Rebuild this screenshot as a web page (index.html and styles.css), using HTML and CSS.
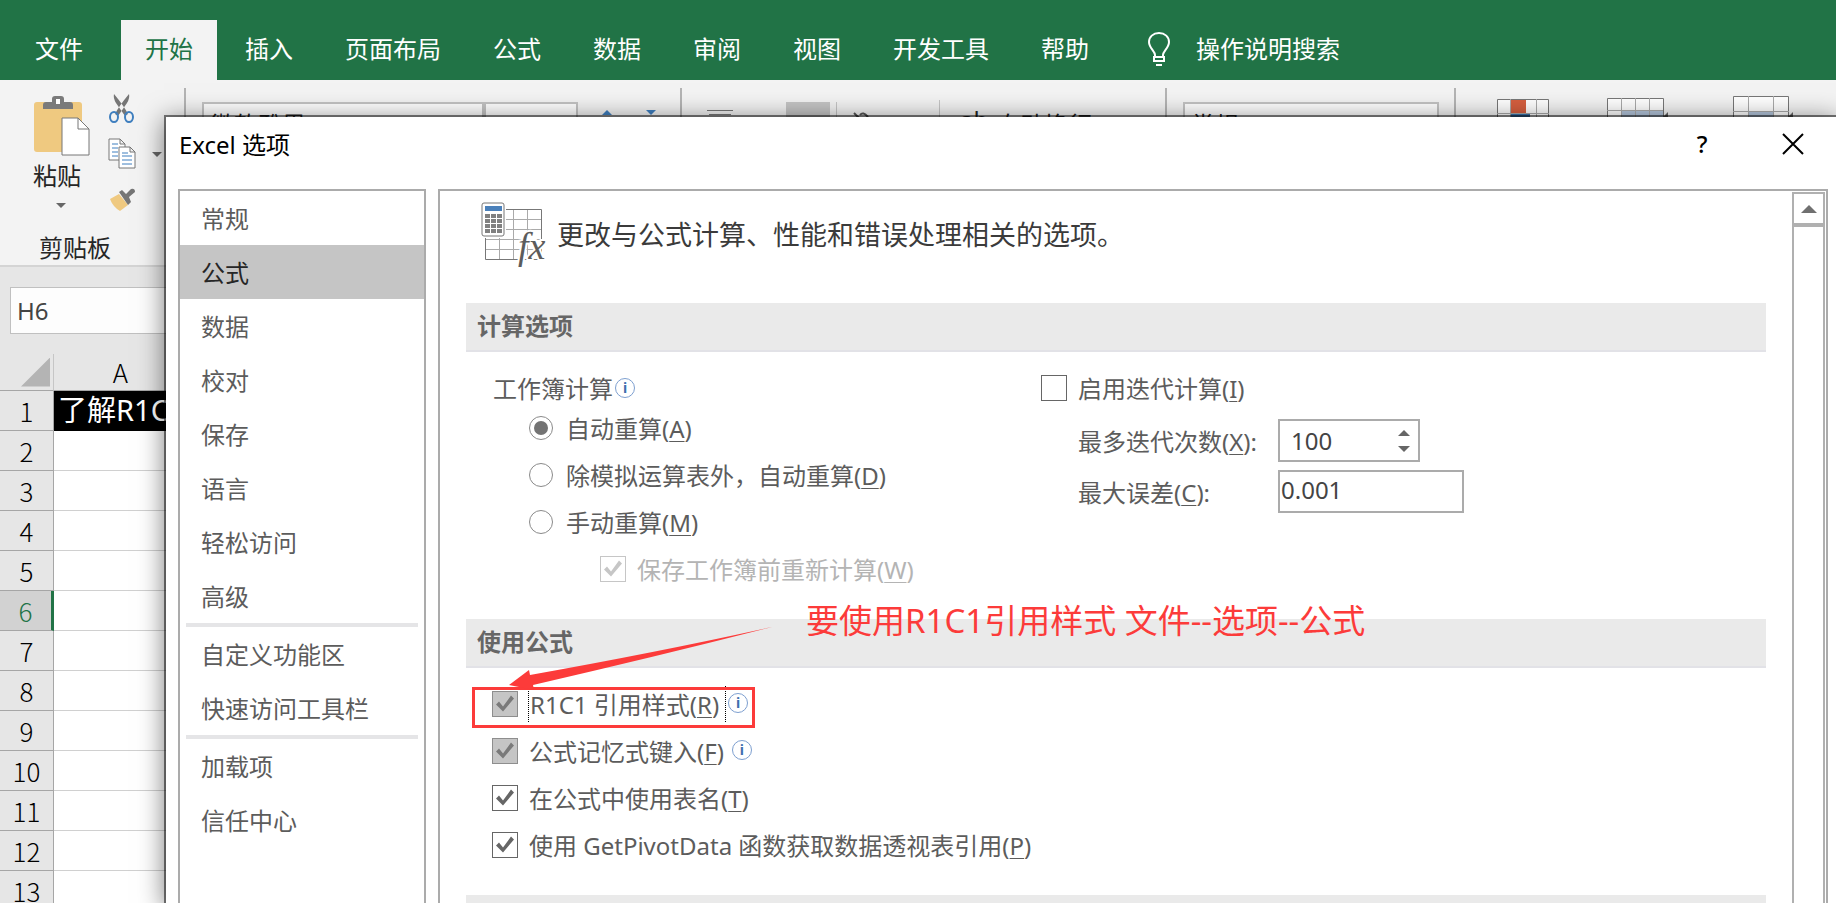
FILE: index.html
```html
<!DOCTYPE html>
<html lang="zh-CN">

<head>
    <meta charset="UTF-8">
    <meta name="viewport" content="width=device-width, initial-scale=1.0">
    <title>Excel 选项</title>
    <link rel="stylesheet" href="styles.css">
</head>

<body>

    <div class="tabs">
        <button class="tab file-tab">文件</button>
        <button class="tab active">开始</button>
        <button class="tab">插入</button>
        <button class="tab">页面布局</button>
        <button class="tab">公式</button>
        <button class="tab">数据</button>
        <button class="tab">审阅</button>
        <button class="tab">视图</button>
        <button class="tab">开发工具</button>
        <button class="tab">帮助</button>
        <button class="tell-me">
            <svg width="24" height="36" viewBox="0 0 24 36" fill="none" stroke="#fff" stroke-width="2">
                <path d="M8 26V23C8 19 2 16 2 10C2 5 6 1 12 1S22 5 22 10C22 16 16 19 16 23V26" />
                <path d="M7 25H17M7 29H17M7 24V30M17 24V30M9 33H15" />
            </svg>
            <span>操作说明搜索</span>
        </button>
    </div>

    <div class="ribbon">
        <div class="group clipboard">
            <div class="clipboard-tools">
                <button class="paste">
                    <svg width="58" height="62" viewBox="0 0 58 62">
                        <rect x="1" y="7" width="48" height="50" rx="3" fill="#efc980" />
                        <path d="M10 14V10Q10 7 13 7H19V4Q19 1 22 1H28Q31 1 31 4V7H37Q40 7 40 10V14Z" fill="#7a7a7a" />
                        <rect x="23" y="4" width="4" height="5" fill="#fff" />
                        <path d="M29 23H45L56 34V60H29Z" fill="#fff" stroke="#777" />
                        <path d="M45 23V34H56" fill="none" stroke="#777" />
                    </svg>
                    <span>粘贴</span>
                    <i class="caret"></i>
                </button>
                <div class="small-tools">
                    <button>
                        <svg width="28" height="30" viewBox="0 0 28 30">
                            <path d="M6 0Q5 4 8 9L17 22L20 20Q16 12 6 0Z M21 0Q22 4 19 9L10 22L7 20Q11 12 21 0Z" fill="#767676" />
                            <ellipse cx="6" cy="23" rx="4" ry="5" fill="none" stroke="#3f7fbf" stroke-width="2" />
                            <ellipse cx="21" cy="23" rx="4" ry="5" fill="none" stroke="#3f7fbf" stroke-width="2" />
                        </svg>
                    </button>
                    <button class="copy">
                        <svg width="28" height="32" viewBox="0 0 28 32" fill="#fff" stroke="#777">
                            <path d="M1 1H12L17 6V22H1Z M12 1V6H17" />
                            <path d="M4 6H10M4 10H10M4 14H10M4 18H10" stroke="#3f7fbf" />
                            <path d="M11 9H22L27 14V30H11Z M22 9V14H27" />
                            <path d="M14 15H20M14 18H24M14 22H24M14 26H24" stroke="#3f7fbf" />
                        </svg>
                        <i class="caret"></i>
                    </button>
                    <button>
                        <svg width="28" height="24" viewBox="0 0 28 24">
                            <path d="M2 11L11 6L20 17L12 23Q5 19 2 11Z" fill="#efc980" />
                            <path d="M11 4L14 2L18 6L23 1Q27 0 27 4L21 9L23 14L20 17Z" fill="#767676" />
                        </svg>
                    </button>
                </div>
            </div>
            <div class="group-name">剪贴板</div>
        </div>
        <div class="group font-group">
            <div class="combo font-name">微软雅黑</div>
            <div class="combo font-size">11</div>
            <i class="tri up"></i>
            <i class="tri down"></i>
        </div>
        <div class="group align-group">
            <svg width="26" height="16" viewBox="0 0 26 16" stroke="#777" stroke-width="1">
                <path d="M0 8.500H26M2 12.500H24" />
            </svg>
            <i class="pressed"></i>
            <i class="thin-line"></i>
            <svg class="rotate" width="18" height="16" viewBox="0 0 18 16" fill="none" stroke="#555" stroke-width="2">
                <path d="M1 11L6 16M7 13Q10 9 15 15" />
            </svg>
            <i class="thin-line second"></i>
            <span class="wrap-ab">ab</span>
            <span class="wrap">自动换行</span>
        </div>
        <div class="group number-group">
            <div class="combo number-format">常规</div>
        </div>
        <div class="group style-group">
            <svg width="52" height="20" viewBox="0 0 52 20">
                <path d="M.5 1.500H51.500V20H.5Z" fill="#fff" stroke="#777" />
                <path d="M13.500 1V20M39.500 1V20M0 15.500H52" stroke="#aaa" />
                <rect x="14" y="2" width="15" height="13" fill="#d65f3f" />
                <rect x="14" y="16" width="19" height="4" fill="#3a75b0" />
            </svg>
            <svg width="62" height="20" viewBox="0 0 62 20">
                <path d="M.5 .5H56.500V20H.5Z" fill="#fff" stroke="#777" />
                <rect x="15" y="13" width="41" height="7" fill="#b4c6dc" />
                <path d="M14.500 0V20M28.500 0V20M42.500 0V20M0 12.500H56" stroke="#aaa" />
                <path d="M55 20L61 14V20Z" fill="#666" />
            </svg>
            <svg width="62" height="22" viewBox="0 0 62 22">
                <path d="M.5 .5H55.500V22H.5Z" fill="#fff" stroke="#777" />
                <rect x="16" y="16" width="24" height="6" fill="#b4c6dc" />
                <path d="M15.500 0V22M40.500 0V22M0 15.500H56" stroke="#aaa" />
                <path d="M54 22L60 16V22Z" fill="#666" />
            </svg>
        </div>
    </div>

    <div class="formula-bar">
        <input class="name-box" type="text" value="H6" aria-label="名称框">
    </div>

    <table class="sheet">
        <thead>
            <tr><th class="corner"><i></i></th><th class="col">A</th><th></th></tr>
        </thead>
        <tbody>
            <tr><th>1</th><td class="filled">了解R1C1</td><td></td></tr>
            <tr><th>2</th><td></td><td></td></tr>
            <tr><th>3</th><td></td><td></td></tr>
            <tr><th>4</th><td></td><td></td></tr>
            <tr><th>5</th><td></td><td></td></tr>
            <tr class="current"><th>6</th><td></td><td></td></tr>
            <tr><th>7</th><td></td><td></td></tr>
            <tr><th>8</th><td></td><td></td></tr>
            <tr><th>9</th><td></td><td></td></tr>
            <tr><th>10</th><td></td><td></td></tr>
            <tr><th>11</th><td></td><td></td></tr>
            <tr><th>12</th><td></td><td></td></tr>
            <tr><th>13</th><td></td><td></td></tr>
        </tbody>
    </table>

    <div class="dialog">
        <div class="title-bar">
            <span class="title">Excel 选项</span>
            <button class="help">?</button>
            <button class="close" aria-label="关闭">
                <svg width="22" height="22" viewBox="0 0 22 22" stroke="#000" stroke-width="2">
                    <path d="M1 1L21 21M21 1L1 21" />
                </svg>
            </button>
        </div>

        <div class="dialog-body">
            <div class="categories">
                <button>常规</button>
                <button class="selected">公式</button>
                <button>数据</button>
                <button>校对</button>
                <button>保存</button>
                <button>语言</button>
                <button>轻松访问</button>
                <button>高级</button>
                <hr>
                <button>自定义功能区</button>
                <button>快速访问工具栏</button>
                <hr>
                <button>加载项</button>
                <button>信任中心</button>
            </div>

            <div class="panel">
                <div class="options">
                    <div class="intro">
                        <svg width="66" height="66" viewBox="0 0 66 66">
                            <path d="M4.500 7.500H60.500V57.500H4.500Z" fill="#fff" stroke="#777" />
                            <path d="M18.500 8V57M32.500 8V57M46.500 8V57M5 17.500H60M5 27.500H60M5 37.500H60M5 47.500H60" stroke="#aaa" />
                            <rect x="0" y="0" width="25" height="36" fill="#fff" />
                            <rect x="1" y="1" width="22" height="33" rx="2" fill="#fff" stroke="#777" />
                            <rect x="4" y="4" width="17" height="5" fill="#4a80ba" />
                            <path d="M4 14H21M4 19H21M4 24H21M4 29H21" stroke="#808080" stroke-width="4" stroke-dasharray="5 1" />
                            <text x="37" y="57" class="fx-text fx-halo">fx</text>
                            <text x="37" y="57" class="fx-text">fx</text>
                        </svg>
                        <span>更改与公式计算、性能和错误处理相关的选项。</span>
                    </div>

                    <h2>计算选项</h2>
                    <div class="section calc">
                        <div class="calc-mode">
                            <div class="row-title">工作簿计算<i class="info">i</i></div>
                            <label class="row radio-row"><input type="radio" name="calc" checked><span>自动重算(<u>A</u>)</span></label>
                            <label class="row radio-row"><input type="radio" name="calc"><span>除模拟运算表外，自动重算(<u>D</u>)</span></label>
                            <label class="row radio-row"><input type="radio" name="calc"><span>手动重算(<u>M</u>)</span></label>
                            <label class="row sub-row"><input type="checkbox" checked disabled><span>保存工作簿前重新计算(<u>W</u>)</span></label>
                        </div>
                        <div class="iteration">
                            <label class="row-title check-title"><input type="checkbox"><span>启用迭代计算(<u>I</u>)</span></label>
                            <div class="field">
                                <label for="max-iter">最多迭代次数(<u>X</u>):</label>
                                <div class="spinner">
                                    <input type="text" id="max-iter" value="100">
                                    <div class="spin-buttons">
                                        <button class="tri up" aria-label="增加"></button>
                                        <button class="tri down" aria-label="减少"></button>
                                    </div>
                                </div>
                            </div>
                            <div class="field">
                                <label for="max-change">最大误差(<u>C</u>):</label>
                                <input type="text" id="max-change" class="text-box" value="0.001">
                            </div>
                        </div>
                    </div>

                    <h2>使用公式</h2>
                    <div class="section formulas">
                        <div class="row">
                            <label class="focused"><input type="checkbox" class="gray" checked><span>R1C1 引用样式(<u>R</u>)</span></label><i class="info">i</i>
                            <div class="mark-box"></div>
                            <svg class="mark-arrow" width="264" height="64" viewBox="0 0 264 64">
                                <path d="M0 58L20 43L21 48Q150 25 263 0Q150 29 24 58L25 63Z" fill="#fc3b3a" />
                            </svg>
                            <div class="mark-text">要使用R1C1引用样式 文件--选项--公式</div>
                        </div>
                        <div class="row">
                            <label><input type="checkbox" class="gray" checked><span>公式记忆式键入(<u>F</u>)</span></label><i class="info">i</i>
                        </div>
                        <div class="row">
                            <label><input type="checkbox" checked><span>在公式中使用表名(<u>T</u>)</span></label>
                        </div>
                        <div class="row">
                            <label><input type="checkbox" checked><span>使用 GetPivotData 函数获取数据透视表引用(<u>P</u>)</span></label>
                        </div>
                    </div>

                    <h2></h2>
                </div>

                <div class="scrollbar">
                    <button aria-label="向上滚动"><i class="tri up"></i></button>
                    <div class="thumb"></div>
                </div>
            </div>
        </div>
    </div>

</body>

</html>
```

FILE: styles.css
```css
* {
    box-sizing: border-box;
}

body {
    margin: 0;
    height: 100vh;
    overflow: hidden;
    position: relative;
    background-color: #e6e6e6;
    font-family: "Noto Sans", "Noto Sans CJK SC", sans-serif;
    font-size: 24px;
    color: #5c5c5c;
}

button,
input {
    font: inherit;
    color: inherit;
    margin: 0;
    padding: 0;
    border: none;
    background: none;
}

svg {
    display: block;
}

/* ribbon tabs */
.tabs {
    display: flex;
    align-items: flex-end;
    gap: 4px;
    height: 80px;
    padding-left: 11px;
    background-color: #217346;
    color: #fff;
}

.tab {
    height: 60px;
    padding: 0 24px 6px;
    white-space: nowrap;
}

.tab.file-tab {
    margin-right: 10px;
}

.tab.active {
    background-color: #f3f3f3;
    color: #217346;
}

.tell-me {
    display: flex;
    align-items: center;
    gap: 25px;
    height: 60px;
    margin-left: 30px;
    white-space: nowrap;
}

.tell-me span {
    padding-bottom: 6px;
}

/* ribbon */
.ribbon {
    display: flex;
    height: 187px;
    background-color: #f3f3f3;
    border-bottom: 2px solid #d4d4d4;
    color: #262626;
}

.group {
    display: flex;
    align-items: flex-start;
    position: relative;
    flex: none;
}

.group:not(:last-child)::after {
    content: "";
    width: 2px;
    height: 170px;
    margin: 8px 0 0 auto;
    background-color: #b4b4b4;
}

.clipboard {
    width: 186px;
    flex-wrap: wrap;
    align-content: flex-start;
}

.clipboard-tools {
    display: flex;
    width: 184px;
    height: 148px;
    padding: 14px 0 0 33px;
}

.clipboard.group::after {
    position: absolute;
    right: 0;
}

.paste {
    display: flex;
    flex-direction: column;
    align-items: flex-start;
    line-height: 38px;
    height: 130px;
}

.paste svg {
    margin-top: 1px;
}

.paste .caret {
    margin: 8px 0 0 23px;
}

.caret {
    width: 0;
    height: 0;
    border: 5px solid transparent;
    border-top-color: #666;
    border-bottom: none;
}

.small-tools {
    display: flex;
    flex-direction: column;
    gap: 14px;
    margin-left: 17px;
}

.small-tools button:last-child {
    margin-top: 4px;
}

.small-tools .copy {
    display: flex;
    align-items: center;
    gap: 16px;
}

.group-name {
    padding-left: 39px;
    line-height: 40px;
}

.combo {
    height: 48px;
    margin-top: 22px;
    padding: 3px 6px;
    line-height: 36px;
    background-color: #fff;
    border: 2px solid #c3c3c3;
}

.font-group {
    width: 496px;
    padding-left: 16px;
}

.font-name {
    width: 282px;
}

.font-size {
    width: 94px;
}

.tri {
    width: 0;
    height: 0;
    padding: 0;
    border: 5px solid transparent;
}

.tri.up {
    border-top: none;
    border-bottom-color: #666;
}

.tri.down {
    border-bottom: none;
    border-top-color: #666;
}

.font-group .tri {
    margin: 30px 0 0 24px;
}

.font-group .tri.up {
    border-bottom-color: #3f7fbf;
}

.font-group .tri.down {
    margin-left: 34px;
    border-top-color: #3f7fbf;
}

.align-group {
    width: 485px;
    padding-left: 25px;
}

.align-group svg {
    margin-top: 22px;
}

.pressed {
    width: 44px;
    height: 44px;
    margin: 22px 6px 0 53px;
    background-color: #c5c5c5;
}

.thin-line {
    width: 1px;
    height: 60px;
    margin-top: 22px;
    background-color: #c5c5c5;
}

.align-group .rotate {
    margin-left: 16px;
}

.thin-line.second {
    margin: 20px 20px 0 68px;
}

.wrap-ab,
.wrap {
    margin-top: 27px;
    line-height: 36px;
}

.wrap-ab {
    margin: 22px 8px 0 0;
}

.number-group {
    width: 289px;
    padding-left: 16px;
}

.number-format {
    width: 256px;
}

.style-group {
    padding: 16px 0 0 41px;
    gap: 58px;
}

.style-group svg:first-child {
    margin-top: 2px;
}

.style-group svg:nth-child(2) {
    margin-top: 2px;
}

.style-group svg:last-child {
    margin-left: 6px;
}

/* name box */
.formula-bar {
    height: 87px;
    padding: 20px 0 0 10px;
}

.name-box {
    width: 220px;
    height: 47px;
    padding-left: 6px;
    background-color: #fdfdfd;
    border: 1px solid #c0c0c0;
    color: #444;
}

/* sheet */
.sheet {
    width: 100%;
    table-layout: fixed;
    border-collapse: separate;
    border-spacing: 0;
    font-size: 29px;
    line-height: 36px;
    color: #000;
}

.sheet th,
.sheet td {
    height: 40px;
    padding: 0;
    border-right: 1px solid #d4d4d4;
    border-bottom: 1px solid #d0d0d0;
    background-color: #fff;
    white-space: nowrap;
}

.sheet th {
    font-family: "Noto Sans CJK SC", sans-serif;
    font-weight: 300;
    font-size: 26px;
    background-color: #e6e6e6;
    border-color: #a6a6a6;
}

.sheet thead th {
    height: 37px;
    border-right-color: #c6c6c6;
}

.sheet .corner {
    width: 54px;
}

.corner i {
    display: block;
    width: 29px;
    height: 29px;
    margin-left: 21px;
    background-color: #b4b4b4;
    clip-path: polygon(100% 0, 100% 100%, 0 100%);
}

.sheet .col {
    width: 134px;
}

.sheet .filled {
    padding: 0 0 2px 4px;
    background-color: #000;
    color: #fff;
    border-color: #000;
}

.sheet .current th {
    background-color: #d2d2d2;
    color: #217346;
    border-right: 3px solid #217346;
}

/* options window, lies over the workbook */
.dialog {
    position: absolute;
    top: 117px;
    left: 166px;
    right: 0;
    bottom: 0;
    display: flex;
    flex-direction: column;
    background-color: #fff;
    box-shadow: 0 0 0 2px rgba(0, 0, 0, 0.5), 0 4px 24px 2px rgba(0, 0, 0, 0.5);
}

.title-bar {
    display: flex;
    align-items: center;
    flex: none;
    height: 72px;
    padding: 0 32px 18px 13px;
    color: #000;
}

.title {
    margin-right: auto;
    padding-bottom: 2px;
}

.help {
    width: 20px;
    margin-right: 70px;
    padding-bottom: 2px;
    font-weight: 500;
}

.dialog-body {
    display: flex;
    gap: 12px;
    flex: 1;
    min-height: 0;
    padding: 0 8px 0 12px;
}

.categories,
.panel {
    border: 2px solid #ababab;
    border-bottom: none;
    overflow: hidden;
}

.categories {
    width: 248px;
    flex: none;
}

.categories button {
    display: block;
    width: 100%;
    height: 54px;
    padding: 0 0 2px 21px;
    text-align: left;
}

.categories .selected {
    background-color: #c5c5c5;
    color: #262626;
}

.categories hr {
    height: 4px;
    margin: 0 6px;
    border: none;
    background-color: #e5e5e7;
}

.panel {
    display: flex;
    flex: 1;
}

.options {
    flex: 1;
    padding: 0 26px;
}

.intro {
    display: flex;
    align-items: center;
    gap: 10px;
    height: 112px;
    padding: 0 0 25px 15px;
    font-size: 27px;
    color: #3b3b3b;
}

.intro span {
    padding-bottom: 2px;
}

.fx-text {
    font-family: "Liberation Serif", serif;
    font-style: italic;
    font-size: 38px;
    fill: #5c5c5c;
}

.fx-halo {
    stroke: #fff;
    stroke-width: 4px;
}

h2 {
    height: 49px;
    margin: 0;
    padding-left: 11px;
    font-size: 24px;
    line-height: 45px;
    background-color: #eaeaea;
    border-bottom: 2px solid #e2e2e7;
    color: #666;
}

.section {
    padding-bottom: 26px;
}

.row,
.row-title,
.row label {
    display: flex;
    align-items: center;
    white-space: nowrap;
}

.row {
    height: 47px;
    position: relative;
}

.row-title {
    height: 33px;
    padding-bottom: 2px;
}

u {
    text-decoration-thickness: 1px;
    text-underline-offset: 3px;
}

.calc {
    display: grid;
    grid-template-columns: 23fr 29fr;
    padding-top: 20px;
}

.calc-mode {
    padding-left: 27px;
}

.radio-row {
    padding: 0 0 2px 36px;
}

.radio-row input {
    margin-right: 13px;
}

.row span,
.row-title span {
    padding-bottom: 1px;
}

.sub-row {
    padding: 0 0 2px 107px;
    color: #b4b4b4;
}

input[type="radio"],
input[type="checkbox"] {
    appearance: none;
    flex: none;
    background-color: #fff;
}

input[type="radio"] {
    width: 24px;
    height: 24px;
    border: 1px solid #8a8a8a;
    border-radius: 50%;
}

input[type="radio"]:checked::before {
    content: "";
    display: block;
    width: 14px;
    height: 14px;
    margin: 4px;
    border-radius: 50%;
    background-color: #737373;
}

input[type="checkbox"] {
    width: 26px;
    height: 26px;
    margin-right: 11px;
    border: 1px solid #666;
}

input[type="checkbox"]:checked::before {
    content: "";
    display: block;
    width: 24px;
    height: 24px;
    background-color: #666;
    clip-path: polygon(3px 13px, 6px 10px, 10px 15px, 18px 4px, 21px 7px, 10px 20px);
}

input[type="checkbox"]:disabled {
    border-color: #c6c6c6;
}

input[type="checkbox"]:disabled::before {
    background-color: #c6c6c6;
}

input[type="checkbox"].gray {
    background-color: #c5c5c5;
    border-color: #8e8e8e;
}

input[type="checkbox"].gray::before {
    background-color: #7a7a7a;
}

.info {
    width: 20px;
    height: 20px;
    margin-left: 2px;
    border: 1px solid #7d9fd0;
    border-radius: 50%;
    font-size: 14px;
    font-style: normal;
    font-weight: 700;
    line-height: 17px;
    text-align: center;
    color: #3f6fae;
}

.check-title {
    margin-bottom: 10px;
}

.field {
    display: flex;
    align-items: center;
    height: 51px;
    padding-left: 37px;
}

.field label {
    width: 200px;
    white-space: nowrap;
}

.spinner,
.text-box {
    height: 43px;
    border: 2px solid #ababab;
    color: #444;
}

.spinner {
    display: flex;
    align-items: center;
    width: 142px;
    padding: 0 8px 0 11px;
}

.spinner input {
    flex: 1;
    min-width: 0;
}

.spin-buttons {
    display: flex;
    flex-direction: column;
    gap: 10px;
}

.spin-buttons .tri {
    border-width: 6px;
}

.spin-buttons .up {
    border-top: none;
}

.spin-buttons .down {
    border-bottom: none;
}

.text-box {
    width: 186px;
    padding: 0 0 4px 1px;
}

.formulas {
    padding-top: 12px;
    padding-left: 26px;
    padding-bottom: 27px;
}

.formulas .row label span {
    padding: 0 6px 1px 0;
}

.formulas .row .info {
    margin-bottom: 2px;
}

.formulas .row .focused span {
    margin-left: -1px;
    padding-left: 1px;
    border: 1px dotted #000;
    border-top: none;
    border-bottom: none;
}

/* red annotations drawn over the window */
.mark-box {
    position: absolute;
    left: -20px;
    top: 7px;
    width: 283px;
    height: 41px;
    border: 3px solid #fc3b3a;
}

.mark-arrow {
    position: absolute;
    left: 17px;
    top: -53px;
}

.mark-text {
    position: absolute;
    left: 314px;
    top: -83px;
    font-size: 33px;
    line-height: 48px;
    color: #fc3b3a;
}

/* scrollbar */
.scrollbar {
    display: flex;
    flex-direction: column;
    width: 33px;
    margin: 1px 1px 0 0;
}

.scrollbar button,
.thumb {
    border: 2px solid #b0b0b0;
}

.scrollbar button {
    display: flex;
    align-items: center;
    justify-content: center;
    height: 33px;
}

.scrollbar .tri {
    border-width: 0 8px 8px;
    border-bottom-color: #707070;
}

.thumb {
    flex: 1;
    border-bottom: none;
}
```
